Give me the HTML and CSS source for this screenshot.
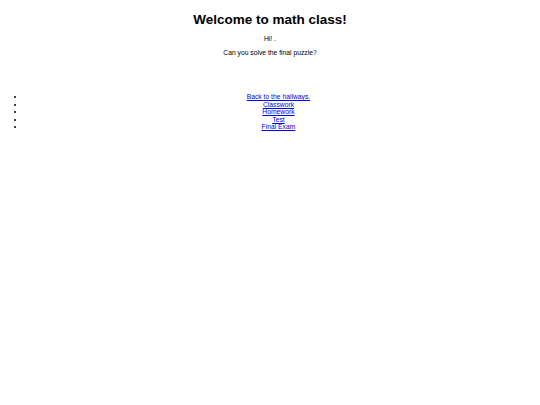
FILE: index.html
```html
<!DOCTYPE html>
<html>
<head>
<meta charset="utf-8">
<title>Math class</title>
<link rel="stylesheet" href="styles.css">
</head>
<body class="page">
<h1 class="title">Welcome to math class!</h1>
<p class="line">Hi! .</p>
<p class="line">Can you solve the final puzzle?</p>
<div class="spacer"></div>
<ul class="menu">
<li><a class="link" href="#">Back to the hallways.</a></li>
<li><a class="link" href="#">Classwork</a></li>
<li><a class="link" href="#">Homework</a></li>
<li><a class="link" href="#">Test</a></li>
<li><a class="link" href="#">Final Exam</a></li>
</ul>
</body>
</html>
```
FILE: styles.css
```css
html {
  background: #ffffff;
}
.page {
  margin: 3.375px;
  font-family: "Liberation Sans", Arial, sans-serif;
  font-size: 6.75px;
  line-height: 7.6px;
  color: #000000;
  text-align: center;
}
.title {
  font-size: 13.5px;
  line-height: 15.5px;
  font-weight: bold;
  margin: 9.05px 0 5px;
}
.line {
  margin: 6.75px 0;
}
.spacer {
  height: 23px;
}
.menu {
  margin: 6.75px 0;
  padding-left: 21.9px;
  padding-right: 5px;
  line-height: 7.5px;
}
.link {
  color: #0000ee;
  text-decoration: underline;
}
```
